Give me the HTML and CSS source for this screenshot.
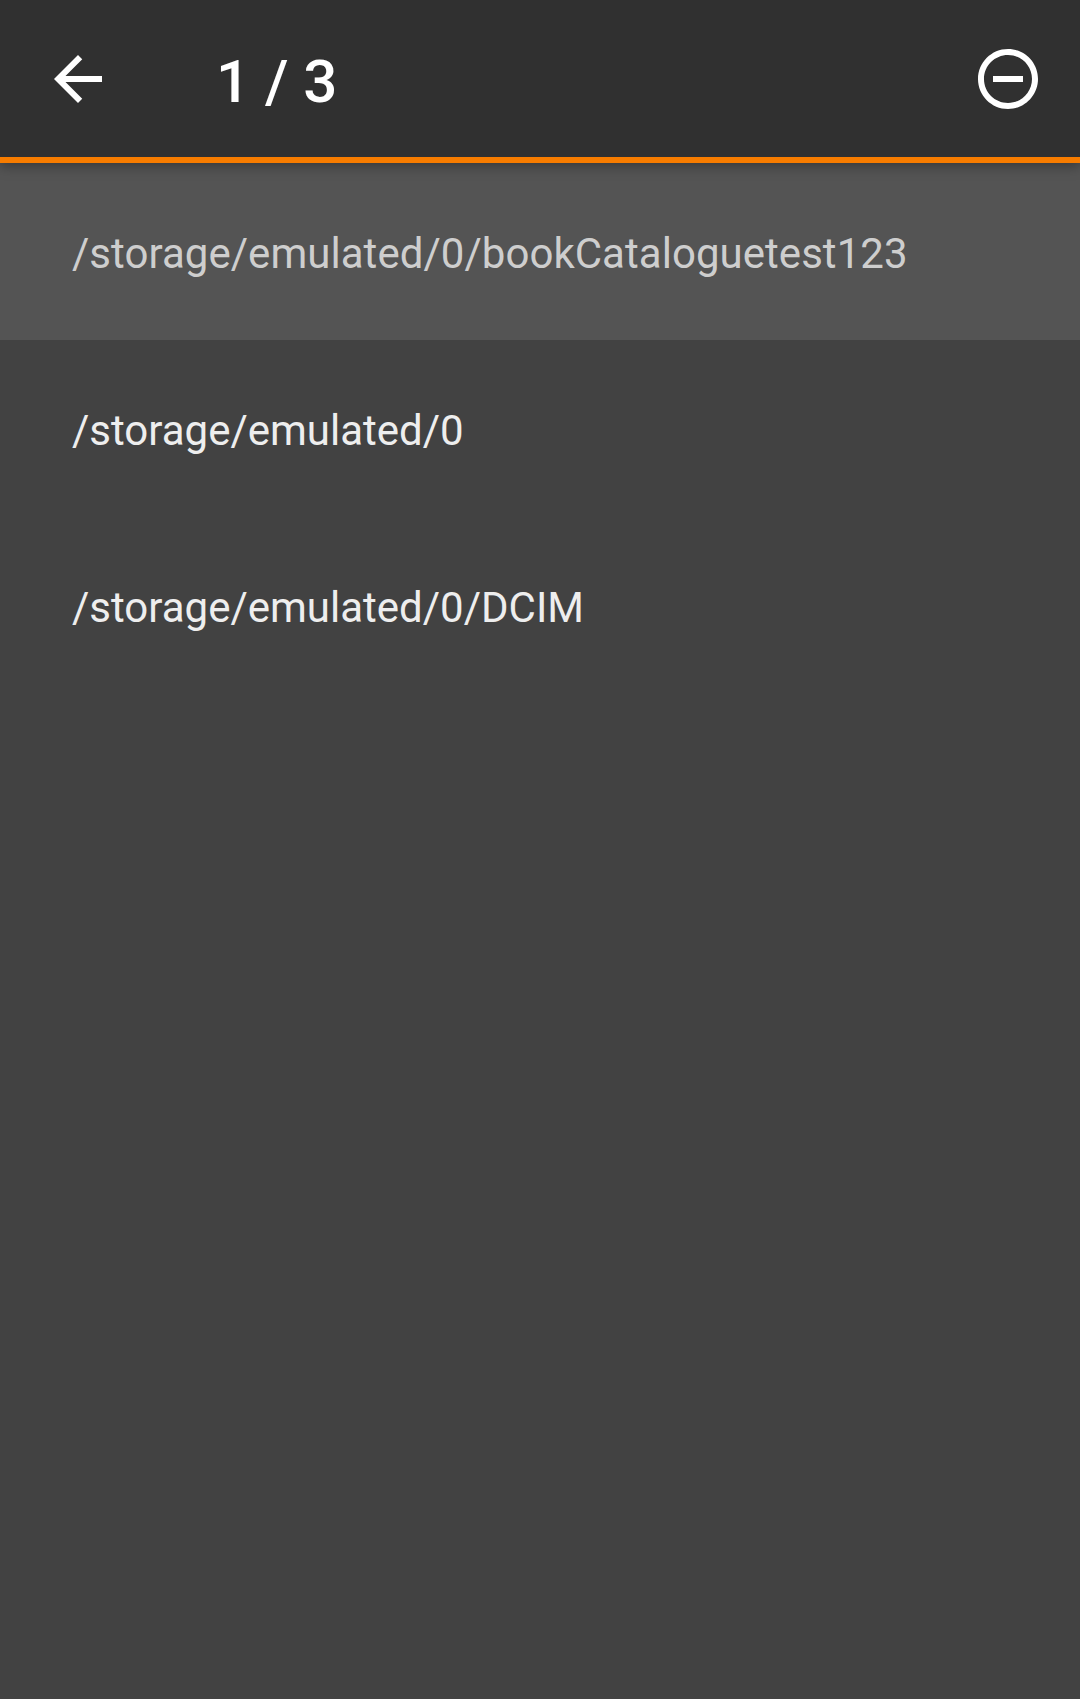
FILE: index.html
```html
<!DOCTYPE html>
<html lang="en">
<head>
<meta charset="utf-8">
<title>Storage locations</title>
<link rel="stylesheet" href="styles.css">
</head>
<body>
<header class="bar">
<svg class="icon" viewBox="0 0 24 24" aria-label="Back"><path d="M20 11H7.83l5.59-5.59L12 4l-8 8 8 8 1.41-1.41L7.83 13H20v-2z"/></svg>
<h1 class="title">1 / 3</h1>
<svg class="icon" viewBox="0 0 24 24" aria-label="Remove"><path d="M7 11v2h10v-2H7zm5-9C6.48 2 2 6.48 2 12s4.48 10 10 10 10-4.48 10-10S17.52 2 12 2zm0 18c-4.41 0-8-3.59-8-8s3.59-8 8-8 8 3.59 8 8-3.59 8-8 8z"/></svg>
</header>
<ul class="list">
<li class="row selected">/storage/emulated/0/bookCataloguetest123</li>
<li class="row">/storage/emulated/0</li>
<li class="row">/storage/emulated/0/DCIM</li>
</ul>
</body>
</html>
```
FILE: styles.css
```css
body {
  margin: 0;
  min-height: 1699px;
  background: #424242;
  font-family: Roboto, sans-serif;
}
.bar {
  box-sizing: border-box;
  position: relative;
  display: flex;
  align-items: center;
  height: 163px;
  padding: 0 36px 0 42px;
  background: #303030;
  border-bottom: 6px solid #f77c00;
  box-shadow: 0 3px 12px rgba(0, 0, 0, .35);
}
.icon {
  width: 72px;
  height: 72px;
  fill: #fff;
}
.title {
  flex: 1;
  margin: 6px 0 0 102px;
  color: #fff;
  font-size: 60px;
  font-weight: 500;
}
.list {
  margin: 0;
  padding: 0;
  list-style: none;
}
.row {
  box-sizing: border-box;
  display: flex;
  align-items: center;
  height: 177px;
  padding: 4px 72px 0;
  color: #eee;
  font-size: 42px;
}
.selected {
  background: #545454;
  color: #cecece;
  letter-spacing: .04px;
}
```
